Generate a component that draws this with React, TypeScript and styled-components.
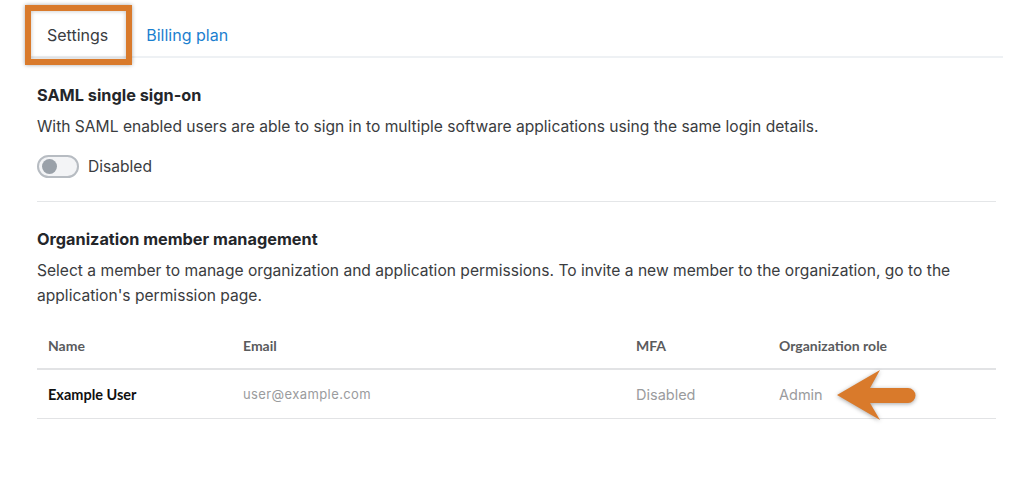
import React from 'react';
import styled, { createGlobalStyle } from 'styled-components';

const GlobalStyle = createGlobalStyle`
  body {
    margin: 0;
    background: #ffffff;
    font-family: Inter, "Noto Sans", sans-serif;
    color: #2d2f33;
  }
`;

const Page = styled.div`
  position: relative;
  width: 1024px;
  height: 493px;
  overflow: hidden;
`;

const TabBar = styled.div`
  display: flex;
  margin: 0 21px 0 25px;
  padding-top: 16px;
  border-bottom: 2px solid #eef1f4;
`;

const Tab = styled.div<{ $active?: boolean }>`
  padding: 10px 22px 12px 22px;
  font-size: 16px;
  line-height: 18px;
  color: ${p => (p.$active ? '#3a3c40' : '#1b7fcf')};
  cursor: pointer;
  &:last-child {
    padding-left: 16px;
  }
`;

const Content = styled.div`
  margin: 0 28px 0 37px;
`;

const Section = styled.section<{ $divider?: boolean }>`
  padding: 26px 0 23px;
  border-bottom: ${p => (p.$divider ? '1px solid #e4e6e8' : 'none')};
`;

const Heading = styled.h3`
  margin: 0 0 8px;
  font-size: 16.3px;
  font-weight: 700;
  line-height: 22px;
  color: #24262a;
`;

const Text = styled.p`
  margin: 0;
  font-size: 15.6px;
  line-height: 25px;
  color: #3a3c40;
`;

const ToggleRow = styled.label`
  display: flex;
  align-items: center;
  gap: 9px;
  margin-top: 16px;
  font-size: 15.6px;
  color: #3a3c40;
`;

const Switch = styled.span`
  box-sizing: border-box;
  display: inline-flex;
  align-items: center;
  width: 42px;
  height: 23px;
  padding: 0 3px;
  border: 2px solid #b7bcc2;
  border-radius: 12px;
  background: #f3f4f6;

  &::before {
    content: '';
    width: 15px;
    height: 15px;
    border-radius: 50%;
    background: #9aa1a9;
  }
`;

const Table = styled.div`
  margin-top: 14px;
  font-family: Lato, "Noto Sans", sans-serif;
`;

const Row = styled.div<{ $head?: boolean }>`
  display: grid;
  grid-template-columns: 195px 393px 143px 1fr;
  align-items: center;
  height: ${p => (p.$head ? '46px' : '48px')};
  padding-left: 11px;
  border-bottom: ${p => (p.$head ? '2px solid #e2e3e5' : '1px solid #e2e3e5')};
`;

const HeadCell = styled.div`
  font-size: 14px;
  font-weight: 700;
  color: #5a5b5d;
`;

const NameCell = styled.div`
  font-size: 14.5px;
  font-weight: 700;
  color: #111;
`;

const MutedCell = styled.div<{ $mono?: boolean }>`
  font-family: Inter, "Noto Sans", sans-serif;
  font-size: ${p => (p.$mono ? '13px' : '14.5px')};
  letter-spacing: ${p => (p.$mono ? '0.4px' : '0')};
  color: #9a9b9d;
`;

const Highlight = styled.div`
  position: absolute;
  left: 25px;
  top: 5px;
  width: 107px;
  height: 60px;
  box-sizing: border-box;
  border: 6px solid #d97a2b;
  box-shadow: 0 0 4px rgba(0, 0, 0, 0.35), inset 0 0 4px rgba(0, 0, 0, 0.25);
  pointer-events: none;
`;

const Arrow = styled.svg`
  position: absolute;
  left: 834px;
  top: 367px;
  filter: drop-shadow(0 1px 2px rgba(0, 0, 0, 0.35));
  pointer-events: none;
`;

export default function App() {
  return (
    <Page>
      <GlobalStyle />
      <TabBar>
        <Tab $active>Settings</Tab>
        <Tab>Billing plan</Tab>
      </TabBar>
      <Content>
        <Section $divider>
          <Heading>SAML single sign-on</Heading>
          <Text>
            With SAML enabled users are able to sign in to multiple software applications using the
            same login details.
          </Text>
          <ToggleRow>
            <Switch />
            Disabled
          </ToggleRow>
        </Section>
        <Section>
          <Heading>Organization member management</Heading>
          <Text>
            Select a member to manage organization and application permissions. To invite a new
            member to the organization, go to the application's permission page.
          </Text>
          <Table>
            <Row $head>
              <HeadCell>Name</HeadCell>
              <HeadCell>Email</HeadCell>
              <HeadCell>MFA</HeadCell>
              <HeadCell>Organization role</HeadCell>
            </Row>
            <Row>
              <NameCell>Example User</NameCell>
              <MutedCell $mono>user@example.com</MutedCell>
              <MutedCell>Disabled</MutedCell>
              <MutedCell>Admin</MutedCell>
            </Row>
          </Table>
        </Section>
      </Content>
      <Highlight />
      <Arrow width="90" height="60" viewBox="0 0 90 60">
        <path
          d="M3 28 L46 3 L36 21 L74 21 A7.5 7.5 0 0 1 74 36 L36 36 L46 53 Z"
          fill="#d97a2b"
        />
      </Arrow>
    </Page>
  );
}
